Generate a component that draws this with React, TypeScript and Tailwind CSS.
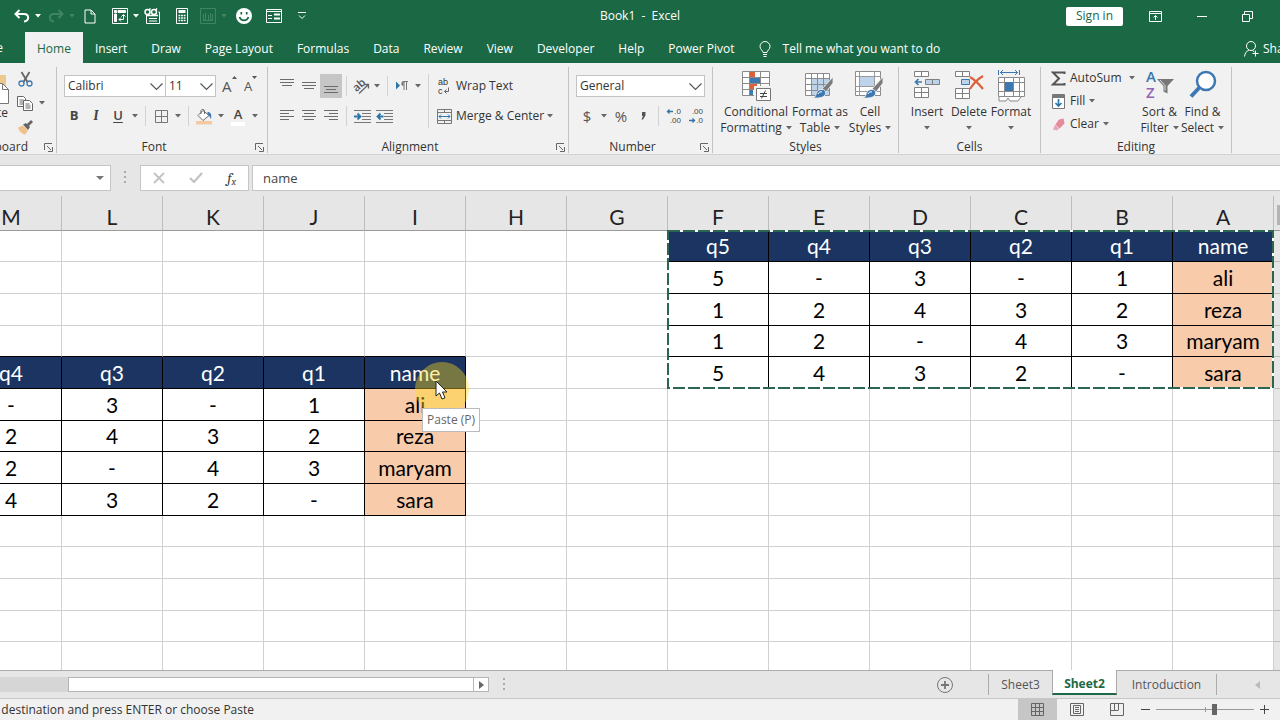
import type { ReactNode } from 'react'
import { clsx } from 'clsx'

const columns = ['M', 'L', 'K', 'J', 'I', 'H', 'G', 'F', 'E', 'D', 'C', 'B', 'A']
const ROWS = 14

const source = [
  ['q5', 'q4', 'q3', 'q2', 'q1', 'name'],
  ['5', '-', '3', '-', '1', 'ali'],
  ['1', '2', '4', '3', '2', 'reza'],
  ['1', '2', '-', '4', '3', 'maryam'],
  ['5', '4', '3', '2', '-', 'sara'],
]

const tabs = [
  'Home',
  'Insert',
  'Draw',
  'Page Layout',
  'Formulas',
  'Data',
  'Review',
  'View',
  'Developer',
  'Help',
  'Power Pivot',
]

// The pasted copy sits four rows down and eight columns over; its q5 column is scrolled away.
function cellAt(row: number, col: number) {
  if (row < 5 && col >= 7) return source[row][col - 7]
  if (row >= 4 && row < 9 && col <= 4) return source[row - 4][col + 1]
  return null
}

function Caret({ className = 'text-[#666]' }: { className?: string }) {
  return (
    <svg width="6" height="4" viewBox="0 0 6 4" className={clsx('inline-block shrink-0', className)} aria-hidden>
      <path d="M0 0h6L3 3.5z" fill="currentColor" />
    </svg>
  )
}

function CaretButton({ label, className }: { label: string; className?: string }) {
  return (
    <button aria-label={label} className="flex h-6 w-3 shrink-0 items-center justify-center">
      <Caret className={className} />
    </button>
  )
}

function Tool({ label, active, children }: { label: string; active?: boolean; children: ReactNode }) {
  return (
    <button
      aria-label={label}
      className={clsx('flex h-6 w-[22px] shrink-0 items-center justify-center', active && 'bg-[#c6c6c6]')}
    >
      {children}
    </button>
  )
}

function Sep() {
  return <span className="mx-1 h-5 w-px shrink-0 bg-[#d2d2d2]" />
}

function Group({
  title,
  launcher,
  className,
  titleClassName = 'justify-center pl-4',
  children,
}: {
  title: string
  launcher?: boolean
  className: string
  titleClassName?: string
  children: ReactNode
}) {
  return (
    <section
      aria-label={title}
      className={clsx('flex shrink-0 flex-col border-r border-[#c3c3c3]', className)}
    >
      <div className="flex-1">{children}</div>
      <div className="flex h-3 items-center">
        <span className={clsx('flex min-w-0 flex-1', titleClassName)}>{title}</span>
        <span className="flex w-4 justify-center">
          {launcher && (
            <button aria-label={`${title} settings`}>
              <svg width="9" height="9" viewBox="0 0 9 9" fill="none" stroke="#666" aria-hidden>
                <path d="M.5 7V.5H8M3 3l4 4M8.5 4v4.500H4" />
              </svg>
            </button>
          )}
        </span>
      </div>
    </section>
  )
}

function Select({ label, value, className }: { label: string; value: string; className: string }) {
  return (
    <div className={clsx('relative', className)}>
      <select
        aria-label={label}
        defaultValue={value}
        className="h-[22px] w-full appearance-none rounded-none border border-[#c3c3c3] bg-white pl-[3px] text-xs"
      >
        <option>{value}</option>
      </select>
      <svg
        width="13"
        height="8"
        viewBox="0 0 13 8"
        className="pointer-events-none absolute top-2 right-[3px]"
        fill="none"
        stroke="#555"
        strokeWidth="1.200"
        aria-hidden
      >
        <path d="M.5.5l6 6 6-6" />
      </svg>
    </div>
  )
}

function BigButton({
  lines,
  className,
  icon,
}: {
  lines: [string, string?]
  className: string
  icon: ReactNode
}) {
  return (
    <button className={clsx('flex shrink-0 flex-col items-center pt-[3px] leading-4 whitespace-nowrap', className)}>
      <span className="mb-0.5 flex h-8 items-start">{icon}</span>
      <span>{lines[0]}</span>
      <span className="flex h-4 items-center gap-1">
        {lines[1]}
        <Caret />
      </span>
    </button>
  )
}

function Lines({ rows }: { rows: [number, number, number][] }) {
  return (
    <svg width="16" height="16" viewBox="0 0 16 16" shapeRendering="crispEdges" aria-hidden>
      {rows.map(([x, y, w]) => (
        <rect key={y} x={x} y={y} width={w} height="1" fill="#6b6b6b" />
      ))}
    </svg>
  )
}

function IndentIcon({ left }: { left?: boolean }) {
  return (
    <svg width="17" height="15" viewBox="0 0 17 15" aria-hidden>
      <path d="M0 1.500h17M8 4.500h9M8 7.500h9M8 10.500h9M0 13.500h17" stroke="#777" />
      <path
        d={left ? 'M7.500 7.500H2M4.500 4.500l-3 3 3 3' : 'M0 7.500h5.500M3.500 4.500l3 3-3 3'}
        stroke="#2f76a8"
        strokeWidth="1.800"
        fill="none"
      />
    </svg>
  )
}

function DecimalIcon({ increase }: { increase?: boolean }) {
  return (
    <svg width="16" height="18" viewBox="0 0 16 18" aria-hidden>
      <g fill="#444" fontSize="8" fontFamily="Liberation Sans, sans-serif" textAnchor="end">
        <text x="15" y="7">{increase ? '.0' : '.00'}</text>
        <text x="15" y="16">{increase ? '.00' : '.0'}</text>
      </g>
      <path
        d={increase ? 'M7 4.500H1.500M3.500 2.500l-2 2 2 2' : 'M1 13.500h5.500M4.500 11.500l2 2-2 2'}
        stroke="#2f76a8"
        strokeWidth="1.300"
        fill="none"
      />
    </svg>
  )
}

function Brush() {
  return (
    <g>
      <path d="M29 7v6l-7 9-4-3z" fill="#7b7b7b" stroke="#f1f1f1" strokeWidth=".8" />
      <path d="M17 19.500c3-.5 5 1 4.500 4-.7 4-6 5-13 4.500 3.500-1 3-2.500 4-5 .8-2 2.500-3.200 4.500-3.500z" fill="#3e78b2" stroke="#f1f1f1" strokeWidth=".8" />
      <path d="M14 24c1-2 2.500-2.500 4-2" stroke="#fff" fill="none" />
    </g>
  )
}

function ConditionalIcon() {
  return (
    <svg width="32" height="32" viewBox="0 0 32 32" aria-hidden>
      <path d="M2.500 1.500h27v24h-27z" fill="#fff" />
      <path d="M9 1.500h6v6H9zM9 13.500h8v6H9z" fill="#d9623b" />
      <path d="M9 7.500h11v6H9zM9 19.500h4v6H9z" fill="#3e78b2" />
      <path d="M2.500 1.500h27v24h-27zM9.500 1v25M20.500 1v25M2 7.500h28M2 13.500h28M2 19.500h28" stroke="#8a8a8a" fill="none" />
      <path d="M15.500 17.500h15v13h-15z" fill="#fff" stroke="#f1f1f1" strokeWidth="3" />
      <path d="M16.500 18.500h14v12h-14z" fill="#fff" stroke="#777" />
      <path d="M20 23.500h7M20 26.500h7M25.500 20.500l-4 8" stroke="#444" />
    </svg>
  )
}

function FormatTableIcon() {
  return (
    <svg width="32" height="32" viewBox="0 0 32 32" aria-hidden>
      <path d="M1.500 3.500h24v22h-24z" fill="#fff" />
      <path d="M7 9h18v16H7z" fill="#bcd3ea" />
      <path d="M1.500 3.500h24v22h-24zM7.500 3v23M13.500 3v23M19.500 3v23M1 8.500h25M1 14.500h25M1 20.500h25" stroke="#8a8a8a" fill="none" />
      <Brush />
    </svg>
  )
}

function CellStylesIcon() {
  return (
    <svg width="32" height="32" viewBox="0 0 32 32" aria-hidden>
      <path d="M1.500 1.500h25v24h-25z" fill="#fff" stroke="#8a8a8a" />
      <path d="M6 7h14v9H6z" fill="#bcd3ea" />
      <path d="M5.500 1v25M20.500 1v25M1 6.500h26M1 16.500h26M1 21.500h26" stroke="#9a9a9a" />
      <Brush />
    </svg>
  )
}

function InsertIcon() {
  return (
    <svg width="30" height="32" viewBox="0 0 30 32" aria-hidden>
      <path d="M2.500 1.500h14v5h-14zM9.500 1.500v5M2.500 17.500h14v10h-14zM9.500 17.500v10M2.500 22.500h14" fill="#fff" stroke="#808080" />
      <path d="M13.500 9.500h14v5h-14zM20.500 9.500v5" fill="#bcd3ea" stroke="#808080" />
      <path d="M10 12H4M6.500 9l-3 3 3 3" stroke="#3e78b2" strokeWidth="1.700" fill="none" />
    </svg>
  )
}

function DeleteIcon() {
  return (
    <svg width="32" height="32" viewBox="0 0 32 32" aria-hidden>
      <path d="M2.500 1.500h14v5h-14zM9.500 1.500v5M2.500 18.500h14v10h-14zM9.500 18.500v10M2.500 23.500h14" fill="#fff" stroke="#808080" />
      <path d="M8.500 9.500h8v5h-8z" fill="#bcd3ea" stroke="#3e78b2" />
      <path d="M17 7c5 3 9 7 13 12M30 6c-5 3-10 8-13 13" stroke="#d9623b" strokeWidth="2.200" fill="none" />
    </svg>
  )
}

function FormatIcon() {
  return (
    <svg width="30" height="32" viewBox="0 0 30 32" aria-hidden>
      <path d="M2.500 0v5M23.500 0v5M4 2.500h18M7 0L4.500 2.500 7 5M19 0l2.500 2.500L19 5" stroke="#3e78b2" fill="none" />
      <path d="M2.500 7.500h26v19h-26z" fill="#fff" />
      <path d="M2.500 7.500h26v19h-26zM8.500 7v19M17.500 7v19M23.500 7v19M2 12.500h27M2 21.500h27" stroke="#8a8a8a" fill="none" />
      <path d="M9 12h8v9H9z" fill="#3e78b2" />
      <path d="M3 27v4h7l2-3 2 3h8l3-4" stroke="#8a8a8a" fill="#fff" />
    </svg>
  )
}

function TitleBar() {
  return (
    <div className="grid h-8 grid-cols-[1fr_auto_1fr] items-center text-white">
      <div className="flex items-center pl-3">
        <button aria-label="Undo" className="flex w-5 justify-center">
          <svg width="16" height="14" viewBox="0 0 16 14" fill="none" stroke="currentColor" strokeWidth="2" aria-hidden>
            <path d="M5.500 1L1.500 5l4 4M2 5h8c5.500 0 5.500 7 0 7.500" />
          </svg>
        </button>
        <CaretButton label="Undo history" className="text-white" />
        <button aria-label="Redo" disabled className="ml-0.5 flex w-5 justify-center text-[#3f8562]">
          <svg width="16" height="14" viewBox="0 0 16 14" fill="none" stroke="currentColor" strokeWidth="2" aria-hidden>
            <path d="M10.500 1l4 4-4 4M14 5H6C.5 5 .5 12 6 12.500" />
          </svg>
        </button>
        <CaretButton label="Redo history" className="text-[#3f8562]" />
        <button aria-label="New file" className="ml-0.5 flex w-5 justify-center">
          <svg width="12" height="15" viewBox="0 0 12 15" fill="none" stroke="currentColor" aria-hidden>
            <path d="M1 1h6l4 4v9H1zM7 1v4h4" />
          </svg>
        </button>
        <button aria-label="PivotTable" className="ml-2.5 flex w-5 justify-center">
          <svg width="16" height="16" viewBox="0 0 16 16" fill="none" stroke="currentColor" aria-hidden>
            <path d="M.5.5h15v15H.5z" />
            <path d="M2.500 2.500h2v2h-2zM6 2.500h7.500v2H6zM2.500 6v7.500h2V6z" fill="currentColor" />
            <path d="M7 11.500h4.500V7M9 9.500l-2 2 2 2M9.500 8.500l2-2 2 2" />
          </svg>
        </button>
        <CaretButton label="PivotTable options" className="text-white" />
        <button aria-label="Form check" className="flex w-5 justify-center">
          <svg width="17" height="16" viewBox="0 0 17 16" fill="none" stroke="currentColor" aria-hidden>
            <path d="M2.500 8v7.500h13V4M5 10.500h8M5 13h8M15.500 4h-1" />
            <circle cx="3.500" cy="4" r="2.500" strokeWidth="1.500" />
            <circle cx="10" cy="4" r="2.500" strokeWidth="1.500" />
            <path d="M5 2l1.500-1.500M11.500 2L13 .5M2 7.500h12" strokeWidth="1.500" />
          </svg>
        </button>
        <button aria-label="Calculator" className="ml-2.5 flex w-5 justify-center">
          <svg width="12" height="16" viewBox="0 0 12 16" fill="none" stroke="currentColor" aria-hidden>
            <path d="M.5.5h11v15H.5z" />
            <path d="M2.500 3h7M2.500 4h7" strokeWidth="2" />
            <path d="M2.500 7.500h7M2.500 10h7M2.500 12.500h7" strokeWidth="1.600" strokeDasharray="1.800 .8" />
          </svg>
        </button>
        <button aria-label="Chart" disabled className="ml-1.5 flex w-5 justify-center text-[#3f8562]">
          <svg width="16" height="16" viewBox="0 0 16 16" fill="none" stroke="currentColor" aria-hidden>
            <path d="M.5.5h15v15H.5zM3.500 12V6M5.500 12V5M8.500 12V7M10.500 12V5M12.500 12V6M3 12.500h10" />
          </svg>
        </button>
        <CaretButton label="Chart options" className="text-[#3f8562]" />
        <button aria-label="Smiley" className="ml-1 flex w-5 justify-center">
          <svg width="16" height="16" viewBox="0 0 16 16" aria-hidden>
            <circle cx="8" cy="8" r="8" fill="#fff" />
            <path d="M5.300 4v2.500M10.700 4v2.500M3.500 9c1.500 4.500 7.500 4.500 9 0" stroke="#1b6944" strokeWidth="1.700" fill="none" />
          </svg>
        </button>
        <button aria-label="Form" className="ml-2.5 flex w-5 justify-center">
          <svg width="16" height="14" viewBox="0 0 16 14" fill="none" stroke="currentColor" aria-hidden>
            <path d="M.5.5h15v13H.5zM0 2.500h16M2 6.500h4M2 9.500h4" />
            <path d="M8 5.500h6M8 9.500h6" strokeWidth="2" />
          </svg>
        </button>
        <button aria-label="Customize Quick Access Toolbar" className="ml-2 flex w-5 justify-center">
          <svg width="8" height="8" viewBox="0 0 8 8" fill="none" stroke="currentColor" aria-hidden>
            <path d="M0 .5h8M1 3.500l3 3 3-3" />
          </svg>
        </button>
      </div>
      <h1>Book1&nbsp; -&nbsp; Excel</h1>
      <div className="flex items-center justify-end pr-[27px]">
        <button className="h-[19px] w-[57px] rounded-xs bg-white text-[#1b6944]">Sign in</button>
        <button aria-label="Ribbon display options" className="ml-[26px]">
          <svg width="13" height="11" viewBox="0 0 13 11" fill="none" stroke="currentColor" aria-hidden>
            <path d="M.5.5h12v10H.5zM.5 2.500h12M6.500 9V4.500M4.500 6.500l2-2 2 2" />
          </svg>
        </button>
        <button aria-label="Minimize" className="ml-[35px]">
          <svg width="10" height="10" viewBox="0 0 10 10" stroke="currentColor" aria-hidden>
            <path d="M0 5.500h10" />
          </svg>
        </button>
        <button aria-label="Restore" className="ml-[35px]">
          <svg width="11" height="11" viewBox="0 0 11 11" fill="none" stroke="currentColor" aria-hidden>
            <path d="M.5 3.500h7v7h-7zM2.500 3V.5h8v7H8" />
          </svg>
        </button>
      </div>
    </div>
  )
}

function RibbonTabs() {
  return (
    <nav className="flex h-[31px] overflow-hidden whitespace-nowrap text-white">
      <div className="flex w-[25px] shrink-0 justify-end overflow-hidden pr-[22px]">
        <button>File</button>
      </div>
      {tabs.map((tab) => (
        <button
          key={tab}
          className={clsx('px-3 pt-0.5', tab === 'Home' && 'bg-[#f1f1f1] text-[#1b6944]')}
        >
          {tab}
        </button>
      ))}
      <button className="ml-1 flex items-center gap-3 px-2 pt-0.5">
        <svg width="12" height="16" viewBox="0 0 12 16" fill="none" stroke="currentColor" aria-hidden>
          <path d="M4 11.500c0-2-3-3-3-6a5 5 0 0110 0c0 3-3 4-3 6zM4 13.500h4M4.500 15.500h3" />
        </svg>
        Tell me what you want to do
      </button>
      <span className="flex-1" />
      <button className="flex w-9 shrink-0 items-center gap-1 pt-0.5">
        <svg width="15" height="16" viewBox="0 0 15 16" fill="none" stroke="currentColor" className="shrink-0" aria-hidden>
          <circle cx="7" cy="5" r="4.500" />
          <path d="M.5 15.500C1 12 2.500 10 5 9M8.500 9.500l2 1.500M11.500 9.500v6M8.500 12.500h6" />
        </svg>
        Share
      </button>
    </nav>
  )
}

function Ribbon() {
  return (
    <div className="flex h-[92px] overflow-hidden border-b border-[#d2d2d2] bg-[#f1f1f1] pt-1 pb-px">
      <Group title="Clipboard" launcher className="w-[57px]" titleClassName="justify-end overflow-hidden pr-3">
        <div className="flex">
          <button className="flex w-2.5 flex-col items-end overflow-hidden pt-1">
            <svg width="32" height="34" viewBox="0 0 32 34" className="shrink-0" aria-hidden>
              <path d="M4 4h24v24H4z" fill="#eec98d" />
              <path d="M14.500 12.500h10l6 6v14h-16z" fill="#fff" stroke="#777" />
              <path d="M24.500 12.500v6h6" fill="none" stroke="#777" />
            </svg>
            <span className="pr-0.5">Paste</span>
          </button>
          <div className="ml-1 flex flex-col">
            <Tool label="Cut">
              <svg width="15" height="16" viewBox="0 0 15 16" fill="none" aria-hidden>
                <path d="M3.500 1l6 10M11.500 1l-6 10" stroke="#666" strokeWidth="1.800" />
                <circle cx="3.500" cy="12.500" r="2.500" stroke="#3e78b2" strokeWidth="1.300" />
                <circle cx="11.500" cy="12.500" r="2.500" stroke="#3e78b2" strokeWidth="1.300" />
              </svg>
            </Tool>
            <div className="flex">
              <Tool label="Copy">
                <svg width="16" height="15" viewBox="0 0 16 15" fill="#fff" stroke="#666" aria-hidden>
                  <path d="M.5.5h6l2 2v8h-8zM2.500 4h4M2.500 6h4M2.500 8h4" />
                  <path d="M6.500 4.500h6l3 3v7h-9zM8.500 8h4M8.500 10h5M8.500 12h5" />
                </svg>
              </Tool>
              <CaretButton label="Copy options" />
            </div>
            <Tool label="Format Painter">
              <svg width="16" height="15" viewBox="0 0 16 15" aria-hidden>
                <path d="M1 7.500l5-2 5 5-3 4c-3-.5-6-3-7-7z" fill="#efc28c" />
                <path d="M6 4.500l3-1.500 4 4-2 3zM10 4l4-4 2 2-4 4z" fill="#666" />
              </svg>
            </Tool>
          </div>
        </div>
      </Group>

      <Group title="Font" launcher className="w-[211px]" titleClassName="justify-center">
        <div className="flex flex-col gap-1.5 pt-[7px]">
          <div className="flex h-6 items-center pl-[7px]">
            <Select label="Font" value="Calibri" className="w-[102px]" />
            <Select label="Font size" value="11" className="-ml-px w-[51px]" />
            <button aria-label="Increase font size" className="ml-1.5 flex w-[14px] items-start text-[15px] leading-5 text-[#555]">
              A<svg width="5" height="4" viewBox="0 0 5 4" className="shrink-0" aria-hidden><path d="M0 3L2.500 0 5 3z" fill="#555" /></svg>
            </button>
            <button aria-label="Decrease font size" className="ml-2 flex w-[14px] items-start text-[13px] leading-5 text-[#555]">
              A<svg width="5" height="4" viewBox="0 0 5 4" className="shrink-0" aria-hidden><path d="M0 0h5L2.500 3z" fill="#555" /></svg>
            </button>
          </div>
          <div className="flex h-6 items-center pl-1.5 text-[13px] text-[#444]">
            <Tool label="Bold"><b>B</b></Tool>
            <Tool label="Italic"><i className="font-serif text-sm font-semibold">I</i></Tool>
            <Tool label="Underline"><u className="font-semibold underline-offset-2">U</u></Tool>
            <CaretButton label="Underline options" />
            <Sep />
            <Tool label="Borders">
              <svg width="13" height="13" viewBox="0 0 13 13" fill="none" stroke="#777" aria-hidden>
                <path d="M.5.500h12v12H.5zM6.500 0v13M0 6.500h13" />
              </svg>
            </Tool>
            <CaretButton label="Border options" />
            <Sep />
            <Tool label="Fill color">
              <svg width="17" height="17" viewBox="0 0 17 17" aria-hidden>
                <path d="M0 13h16v3.500H0z" fill="#f4c9a4" />
                <path d="M7 2.500l6 5-6 5-5-5z" fill="#fff" stroke="#666" />
                <path d="M5 6V2.500a2 2 0 013.500 0V6" fill="none" stroke="#666" />
                <path d="M11.500 4c3 0 4.500 2 3.500 7-1-1-1-3-3.500-5z" fill="#3e78b2" />
              </svg>
            </Tool>
            <CaretButton label="Fill color options" />
            <Tool label="Font color">
              <span className="border-b-4 border-white px-[3px] leading-4 font-semibold">A</span>
            </Tool>
            <CaretButton label="Font color options" />
          </div>
        </div>
      </Group>

      <Group title="Alignment" launcher className="w-[301px]" titleClassName="justify-center">
        <div className="flex items-center pt-[7px] pl-2">
          <div className="flex flex-col gap-1.5">
            <div className="flex h-6 items-center">
              <Tool label="Top align"><Lines rows={[[1, 1, 14], [1, 4, 14], [3, 7, 10]]} /></Tool>
              <Tool label="Middle align"><Lines rows={[[1, 4, 14], [1, 7, 14], [3, 10, 10]]} /></Tool>
              <Tool label="Bottom align" active><Lines rows={[[1, 8, 14], [3, 11, 10], [1, 14, 14]]} /></Tool>
              <Sep />
              <button aria-label="Orientation" className="flex w-5 justify-center">
                <svg width="17" height="17" viewBox="0 0 17 17" aria-hidden>
                  <text x="0" y="11" fontSize="11" fontWeight="600" fill="#555" fontFamily="Open Sans, sans-serif" transform="rotate(-42 6 8)">ab</text>
                  <path d="M6 15.500L15 7M11.500 6.500H15.500V10.500" fill="none" stroke="#666" strokeWidth="1.300" />
                </svg>
              </button>
              <CaretButton label="Orientation options" />
              <Sep />
              <button aria-label="Text direction" className="flex w-5 justify-center">
                <svg width="14" height="12" viewBox="0 0 14 12" aria-hidden>
                  <path d="M1 1.500v8L5 5.500z" fill="#2f76a8" />
                  <path d="M13 1.500H8.500a2.200 2.200 0 000 4.500V1.500" fill="#777" />
                  <path d="M9 1v9M11.500 1v9M7.500 1.500H13" stroke="#777" />
                </svg>
              </button>
              <CaretButton label="Text direction options" />
            </div>
            <div className="flex h-6 items-center">
              <Tool label="Align left"><Lines rows={[[1, 2, 14], [1, 5, 9], [1, 8, 14], [1, 11, 9]]} /></Tool>
              <Tool label="Center"><Lines rows={[[1, 2, 14], [3, 5, 10], [1, 8, 14], [3, 11, 10]]} /></Tool>
              <Tool label="Align right"><Lines rows={[[1, 2, 14], [6, 5, 9], [1, 8, 14], [6, 11, 9]]} /></Tool>
              <Sep />
              <Tool label="Decrease indent"><IndentIcon /></Tool>
              <Tool label="Increase indent"><IndentIcon left /></Tool>
            </div>
          </div>
          <span className="mx-1 h-[54px] w-px bg-[#d2d2d2]" />
          <div className="flex flex-col gap-1.5 pl-1">
            <button className="flex h-6 items-center gap-1">
              <svg width="15" height="20" viewBox="0 0 15 20" aria-hidden>
                <g fontSize="9" fill="#333" fontFamily="Liberation Sans, sans-serif">
                  <text x="1" y="9">ab</text>
                  <text x="1" y="18">c</text>
                </g>
                <path d="M11.500 11.500V15.500H7.500M9.500 13.500l-2 2 2 2" fill="none" stroke="#666" />
              </svg>
              Wrap Text
            </button>
            <div className="flex items-center">
              <button className="flex h-6 items-center gap-1">
                <svg width="15" height="15" viewBox="0 0 15 15" fill="none" aria-hidden>
                  <path d="M.5.500h14v14H.5zM.5 3.500h14M.5 11.500h14M7.500 0v3.500M7.500 11.500V15" stroke="#777" />
                  <path d="M2 7.500h11M4 5.500l-2 2 2 2M11 5.500l2 2-2 2" stroke="#2f76a8" />
                </svg>
                Merge &amp; Center
              </button>
              <CaretButton label="Merge options" />
            </div>
          </div>
        </div>
      </Group>

      <Group title="Number" launcher className="w-36" titleClassName="justify-center">
        <div className="flex flex-col gap-1.5 pt-[7px] pl-[7px]">
          <div className="flex h-6 items-center">
            <Select label="Number format" value="General" className="w-[129px]" />
          </div>
          <div className="flex h-6 items-center text-[15px] text-[#555]">
            <Tool label="Accounting format">$</Tool>
            <CaretButton label="Accounting options" />
            <Tool label="Percent style">%</Tool>
            <Tool label="Comma style">
              <svg width="5" height="8" viewBox="0 0 5 8" aria-hidden>
                <path d="M1 0h3.500v3.500L2 7.500H.5L2 4H1z" fill="#555" />
              </svg>
            </Tool>
            <Sep />
            <Tool label="Increase decimal"><DecimalIcon increase /></Tool>
            <Tool label="Decrease decimal"><DecimalIcon /></Tool>
          </div>
        </div>
      </Group>

      <Group title="Styles" className="w-[186px]">
        <div className="flex pl-2">
          <BigButton lines={['Conditional', 'Formatting']} className="w-[70px]" icon={<ConditionalIcon />} />
          <BigButton lines={['Format as', 'Table']} className="w-[58px]" icon={<FormatTableIcon />} />
          <BigButton lines={['Cell', 'Styles']} className="w-[42px]" icon={<CellStylesIcon />} />
        </div>
      </Group>

      <Group title="Cells" className="w-[142px]">
        <div className="flex pl-[7px]">
          <BigButton lines={['Insert']} className="w-[42px]" icon={<InsertIcon />} />
          <BigButton lines={['Delete']} className="w-[42px]" icon={<DeleteIcon />} />
          <BigButton lines={['Format']} className="w-[42px]" icon={<FormatIcon />} />
        </div>
      </Group>

      <Group title="Editing" className="w-[191px]">
        <div className="flex pl-2.5">
          <div className="flex w-[87px] flex-col">
            <div className="flex h-[22px] items-center">
              <button className="flex h-[22px] items-center gap-1">
                <svg width="15" height="15" viewBox="0 0 15 15" fill="none" stroke="#555" aria-hidden>
                  <path d="M13.500 3V1.500H2l6 6-6 6h11.500V12" strokeWidth="2" />
                </svg>
                AutoSum
              </button>
              <span className="flex-1" />
              <CaretButton label="AutoSum options" />
            </div>
            <button className="flex h-6 items-center gap-1">
              <svg width="15" height="15" viewBox="0 0 15 15" fill="none" aria-hidden>
                <path d="M1.500.500h12v14h-12z" fill="#fff" stroke="#777" />
                <path d="M1 1h13v3H1z" fill="#777" />
                <path d="M7.500 5v7M4.500 9l3 3 3-3" stroke="#2f76a8" strokeWidth="1.700" />
              </svg>
              Fill
              <Caret />
            </button>
            <button className="flex h-[22px] items-center gap-1">
              <svg width="15" height="15" viewBox="0 0 15 15" aria-hidden>
                <path d="M8 2.500l4.500-1 1 5-5 5-4-4z" fill="#e58a9b" />
                <path d="M4 7.500l4 4-2 2-4-1z" fill="#e9a5b1" />
              </svg>
              Clear
              <Caret />
            </button>
          </div>
          <BigButton
            lines={['Sort &', 'Filter']}
            className="w-[43px]"
            icon={
              <svg width="30" height="32" viewBox="0 0 30 32" aria-hidden>
                <g fontSize="15" fontWeight="600" fontFamily="Open Sans, sans-serif">
                  <text x="1" y="12" fill="#3e78b2">A</text>
                  <text x="1" y="28" fill="#9463b5">Z</text>
                </g>
                <path d="M12 9h17l-6.500 7v7.500l-4-2V16z" fill="#777" />
                <path d="M15 10l5 5.500v5" stroke="#ddd" fill="none" />
              </svg>
            }
          />
          <BigButton
            lines={['Find &', 'Select']}
            className="w-[43px]"
            icon={
              <svg width="28" height="32" viewBox="0 0 28 32" fill="none" stroke="#3e78b2" aria-hidden>
                <circle cx="17" cy="11" r="9" fill="#fff" strokeWidth="2.500" />
                <path d="M10.500 17.500L2 26.500" strokeWidth="4" />
              </svg>
            }
          />
        </div>
      </Group>
    </div>
  )
}

function Dots() {
  return (
    <svg width="3" height="13" viewBox="0 0 3 13" fill="#aaa" aria-hidden>
      <path d="M0 0h2v2H0zM0 5h2v2H0zM0 10h2v2H0z" />
    </svg>
  )
}

function FormulaBar() {
  return (
    <div className="flex h-[41px] items-center bg-[#e6e6e6] pt-1">
      <button
        aria-label="Name Box"
        className="flex h-[26px] w-[111px] items-center justify-end border border-l-0 border-[#c6c6c6] bg-white pr-[6px]"
      >
        <svg width="8" height="4" viewBox="0 0 8 4" aria-hidden>
          <path d="M0 0h8L4 4z" fill="#777" />
        </svg>
      </button>
      <span className="flex w-[29px] justify-center">
        <Dots />
      </span>
      <div className="flex h-[26px] w-[109px] items-center justify-around border border-[#c6c6c6] bg-white">
        <button aria-label="Cancel">
          <svg width="12" height="12" viewBox="0 0 12 12" stroke="#c2c2c2" strokeWidth="1.800" aria-hidden>
            <path d="M1 1l10 10M11 1L1 11" />
          </svg>
        </button>
        <button aria-label="Enter">
          <svg width="14" height="12" viewBox="0 0 14 12" fill="none" stroke="#c2c2c2" strokeWidth="2.200" aria-hidden>
            <path d="M1 6l4 4 8-9" />
          </svg>
        </button>
        <button aria-label="Insert Function" className="font-serif text-[15px] leading-5 text-[#444] italic">
          f<sub className="text-[10px]">x</sub>
        </button>
      </div>
      <input
        aria-label="Formula Bar"
        defaultValue="name"
        className="ml-[3px] h-[26px] min-w-0 flex-1 border border-r-0 border-[#c6c6c6] bg-white pl-2.5 text-[13px] text-[#444]"
      />
    </div>
  )
}

function Cell({ row, col }: { row: number; col: number }) {
  const value = cellAt(row, col)
  const filled = value !== null
  const header = filled && (row === 0 || (row === 4 && col <= 4))
  const name = filled && !header && (col === 12 || col === 4)
  return (
    <td
      className={clsx(
        'border-r border-b p-0 text-center',
        filled ? 'border-r-black' : 'border-r-[#d0d0d0]',
        filled || cellAt(row + 1, col) !== null ? 'border-b-black' : 'border-b-[#d0d0d0]',
        header && 'bg-[#1b3461] text-white',
        name && 'bg-[#f8cbab]',
      )}
    >
      {value}
    </td>
  )
}

function Sheet() {
  return (
    <main className="flex min-h-0 flex-1 justify-end overflow-hidden bg-white">
      <div className="relative w-[1319px] shrink-0">
        <table className="w-full table-fixed border-separate border-spacing-0 font-['Lato','Open_Sans',sans-serif] text-[21px] leading-5 text-black">
          <thead>
            <tr className="h-[35px] bg-[#e6e6e6]">
              {columns.map((name) => (
                <th
                  key={name}
                  scope="col"
                  className="w-[101px] border-r border-b border-r-[#bdbdbd] border-b-[#9b9b9b] p-0 pt-2 font-normal text-[#222]"
                >
                  {name}
                </th>
              ))}
              <td className="border-b border-[#9b9b9b] p-0 pt-1 pl-[3px]">
                <div className="h-5 bg-[#b4b4b4]" />
              </td>
            </tr>
          </thead>
          <tbody>
            {Array.from({ length: ROWS }, (_, row) => (
              <tr key={row} className={row % 3 === 0 ? 'h-[31px]' : 'h-8'}>
                {columns.map((name, col) => (
                  <Cell key={name} row={row} col={col} />
                ))}
                <td className="border-b border-[#bdbdbd] bg-[#e6e6e6] p-0" />
              </tr>
            ))}
          </tbody>
        </table>

        {/* copied range */}
        <svg className="absolute top-[34px] left-[706px]" width="608" height="160" fill="none" strokeWidth="2" aria-hidden>
          <rect x="1" y="1" width="605" height="157" stroke="#fff" />
          <rect x="1" y="1" width="605" height="157" stroke="#2b6650" strokeDasharray="12 3" />
        </svg>

        {/* pointer */}
        <div className="absolute top-[166px] left-[454px] size-[54px] rounded-full bg-[#ffdc14]/40" />
        <div className="absolute top-[212px] left-[461px] border border-[#bbb] bg-white px-1 py-[3px] leading-4 whitespace-nowrap text-[#666]">
          Paste (P)
        </div>
        <svg className="absolute top-[184px] left-[474px]" width="13" height="20" viewBox="0 0 13 20" aria-hidden>
          <path d="M1 1v15l3.500-3 2.500 6 3-1.200-2.500-5.800H12z" fill="#fff" stroke="#222" />
        </svg>
      </div>
    </main>
  )
}

function SheetTabs() {
  return (
    <div className="flex h-7 shrink-0 items-stretch border-t border-[#ababab] bg-[#e6e6e6] text-[#555]">
      <div className="flex items-center">
        <span className="h-[15px] w-[68px] bg-[#d6d6d6]" />
        <span className="h-[15px] w-[406px] border border-[#b5b5b5] bg-white" />
        <button
          aria-label="Scroll right"
          className="flex h-[15px] w-[15px] items-center justify-center border border-l-0 border-[#b5b5b5] bg-white"
        >
          <svg width="5" height="8" viewBox="0 0 5 8" aria-hidden>
            <path d="M0 0l5 4-5 4z" fill="#666" />
          </svg>
        </button>
        <span className="ml-3.5">
          <Dots />
        </span>
      </div>
      <span className="flex-1" />
      <button aria-label="New sheet" className="mr-[35px]">
        <svg width="16" height="16" viewBox="0 0 16 16" fill="none" stroke="#777" aria-hidden>
          <circle cx="8" cy="8" r="7.500" />
          <path d="M8 4v8M4 8h8" strokeWidth="1.800" />
        </svg>
      </button>
      <button className="my-[3px] w-16 border-l border-[#ababab]">Sheet3</button>
      <button className="-mt-px mb-[3px] w-[65px] border-x border-b-2 border-x-[#ababab] border-b-[#1b6944] bg-white pt-[5px] font-bold text-[#1b6944]">
        Sheet2
      </button>
      <button className="my-[3px] w-[100px] border-r border-[#ababab]">Introduction</button>
      <button aria-label="Scroll sheets" className="mr-5 ml-[38px]">
        <svg width="5" height="8" viewBox="0 0 5 8" aria-hidden>
          <path d="M5 0L0 4l5 4z" fill="#bbb" />
        </svg>
      </button>
    </div>
  )
}

function StatusBar() {
  return (
    <footer className="flex h-[22px] shrink-0 items-center border-t border-[#c6c6c6] bg-[#f1f1f1] whitespace-nowrap">
      <p className="flex w-[254px] justify-end overflow-hidden">Select destination and press ENTER or choose Paste</p>
      <span className="flex-1" />
      <button aria-label="Normal view" className="flex h-full w-[39px] items-center justify-center bg-[#c6c6c6]">
        <svg width="13" height="13" viewBox="0 0 13 13" fill="none" stroke="#666" aria-hidden>
          <path d="M.5.500h12v12H.5zM4.500 0v13M8.500 0v13M0 4.500h13M0 8.500h13" />
        </svg>
      </button>
      <button aria-label="Page layout view" className="flex h-full w-10 items-center justify-center">
        <svg width="14" height="13" viewBox="0 0 14 13" fill="none" stroke="#666" aria-hidden>
          <path d="M.5.500h13v12H.5zM3.500 2.500h7v8h-7zM5 4.500h4M5 6.500h4M5 8.500h4" />
        </svg>
      </button>
      <button aria-label="Page break preview" className="flex h-full w-10 items-center justify-center">
        <svg width="14" height="13" viewBox="0 0 14 13" fill="none" stroke="#666" aria-hidden>
          <path d="M.5.500h13v12H.5zM4.500 0v7M8.500 0v7M.5 7.500h8" />
        </svg>
      </button>
      <button aria-label="Zoom out" className="ml-1">
        <svg width="9" height="9" viewBox="0 0 9 9" stroke="#444" aria-hidden>
          <path d="M0 4.500h9" />
        </svg>
      </button>
      <div className="relative mx-1.5 flex items-center">
        <span className="absolute left-1/2 h-[5px] w-px bg-[#999]" />
        <input
          type="range"
          aria-label="Zoom"
          defaultValue={60}
          className="relative h-3 w-[98px] appearance-none bg-linear-to-b from-[#999] to-[#999] bg-[length:100%_1px] bg-center bg-no-repeat [&::-webkit-slider-thumb]:h-[11px] [&::-webkit-slider-thumb]:w-[5px] [&::-webkit-slider-thumb]:appearance-none [&::-webkit-slider-thumb]:bg-[#666]"
        />
      </div>
      <button aria-label="Zoom in" className="mr-[11px]">
        <svg width="9" height="9" viewBox="0 0 9 9" stroke="#444" aria-hidden>
          <path d="M0 4.500h9M4.500 0v9" />
        </svg>
      </button>
    </footer>
  )
}

export default function App() {
  return (
    <div className="flex h-screen flex-col overflow-hidden bg-[#e6e6e6] font-['Open_Sans','Noto_Sans',sans-serif] text-xs text-[#333]">
      <header className="shrink-0 bg-[#1b6944]">
        <TitleBar />
        <RibbonTabs />
        <Ribbon />
        <FormulaBar />
      </header>
      <Sheet />
      <SheetTabs />
      <StatusBar />
    </div>
  )
}
